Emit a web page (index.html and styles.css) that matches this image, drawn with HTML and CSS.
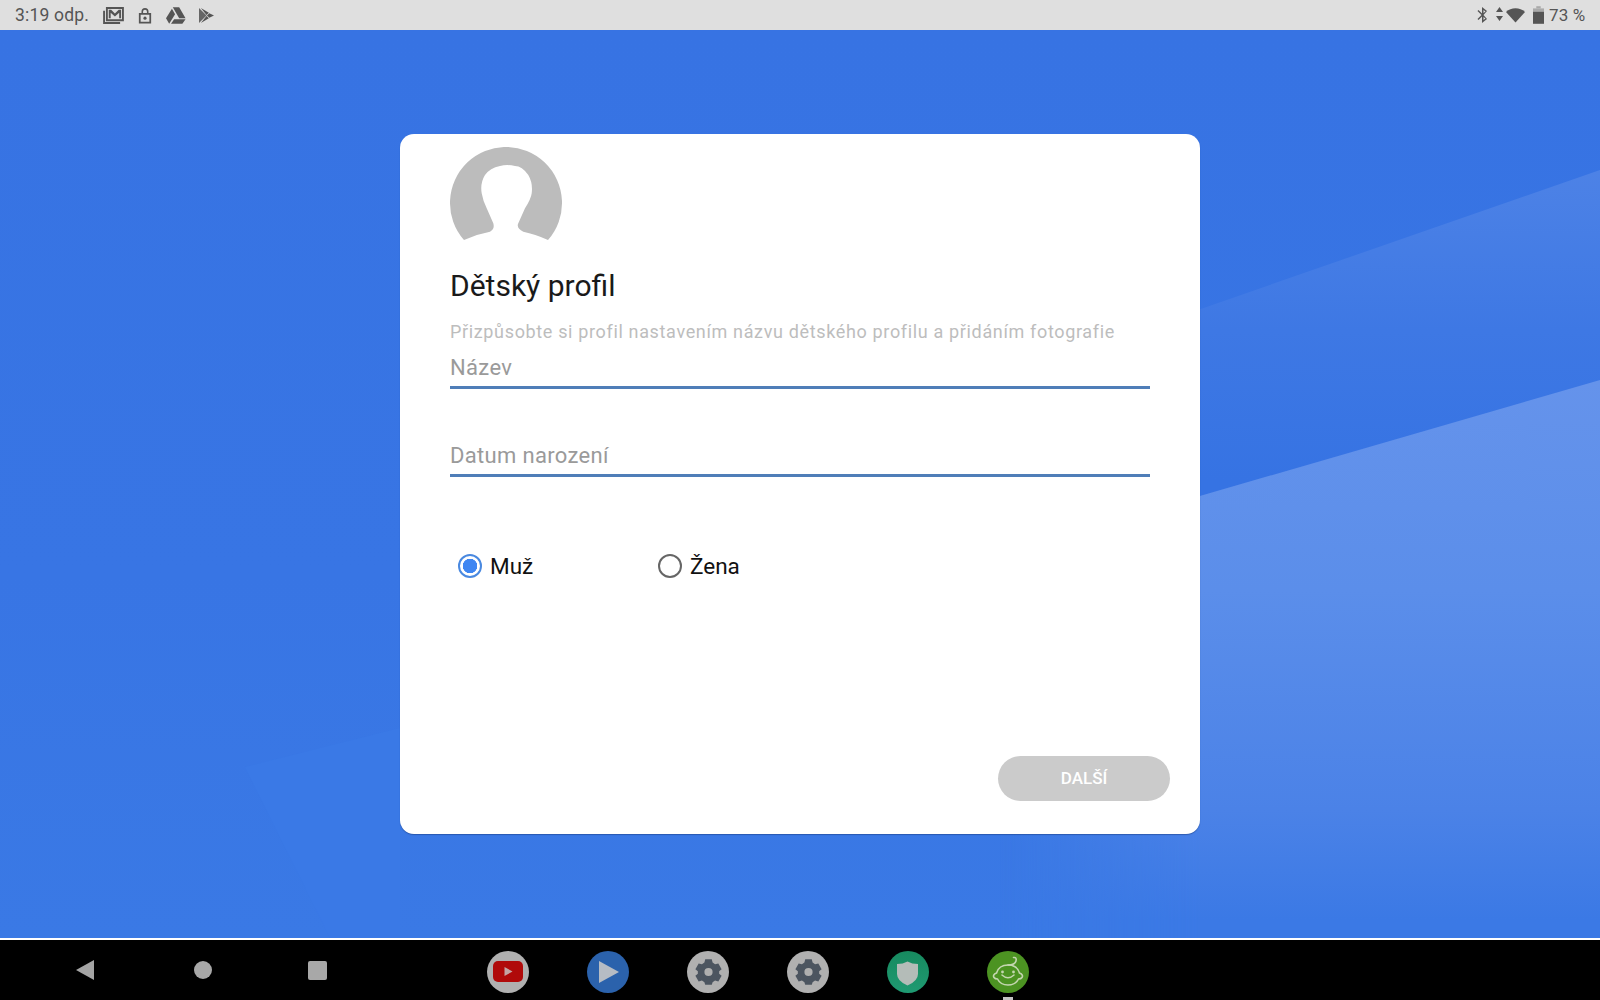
FILE: index.html
```html
<!DOCTYPE html>
<html lang="cs">
<head>
<meta charset="utf-8">
<title>Dětský profil</title>
<link rel="stylesheet" href="styles.css">
</head>
<body>
<header class="status">
  <div class="status-left">
    <span class="clock">3:19 odp.</span>
    <svg class="si si-mail" viewBox="0 0 22 18"><path d="M0 4h2v12h16v2H0z" fill="#555"/><path fill-rule="evenodd" d="M3 0h19v15H3zM5 2v11h15V2zM6 3h2.500l4 4 4-4H19v9h-2V6l-4.500 4L8 6v6H6z" fill="#555"/></svg>
    <svg class="si si-lock" viewBox="0 0 16 18"><path fill-rule="evenodd" d="M1 6h3V4.500a4 4 0 0 1 8 0V6h3v12H1zM3 8v8h10V8zM5.800 6h4.400V4.500a2.200 2.200 0 0 0-4.400 0z" fill="#555"/><circle cx="8" cy="12" r="1.800" fill="#555"/></svg>
    <svg class="si si-drive" viewBox="0 0 22 18"><path d="M7.500 0h7l7 12h-7zM6.500 1.500 10 7.500 3.500 18 0 12zM9 13h12.500L18 18H5.500z" fill="#555"/></svg>
    <svg class="si si-play" viewBox="0 0 16 16"><path d="M0 0l8 8-8 8z" fill="#666"/><path d="M2 0l8.500 5L8 7.500zM8.500 8l2.500-2.500L16 8l-5 2.500zM2 16l6-7.500 2.500 2.500z" fill="#555"/></svg>
  </div>
  <div class="status-right">
    <svg class="si si-bt" viewBox="0 0 11 16"><path d="M5 0l5 4-3.500 4 3.500 4-5 4V9.500L1.500 13 .5 12 4.500 8 .5 4l1-1L5 6.500zM6.500 3v3l2-1.500zM6.500 10v3l2-1.500z" fill="#555"/></svg>
    <svg class="si si-arrows" viewBox="0 0 7 14"><path d="M3.500 0 7 5H0zM0 9h7l-3.500 5z" fill="#555"/></svg>
    <svg class="si si-wifi" viewBox="0 0 19 14"><path d="M0 3.500a14 14 0 0 1 19 0L9.500 14z" fill="#555"/></svg>
    <svg class="si si-batt" viewBox="0 0 10 16"><path d="M3 0h4v2H3z" fill="#aaa"/><path d="M0 2h10v3H0z" fill="#aaa"/><path d="M0 5h10v11H0z" fill="#555"/></svg>
    <span class="batt-text">73 %</span>
  </div>
</header>

<main class="wallpaper">
  <div class="band band-faint"></div>
  <div class="band band-mid"></div>
  <div class="band band-low"></div>
  <section class="card">
    <svg class="avatar" viewBox="0 0 112 96">
      <path d="M14 93A56 56 0 1 1 98 93Q85 87 73.300 84.700Q66 81 68.300 76.300L75 61.300Q81 52 81.700 46.300Q83 36 78.300 28Q72 19 65 19Q57 17 50 19Q40 21 35 28Q30 36 31.700 46.300Q33 54 36.700 61.300L43.300 76.300Q45 82 40 84.700Q27 87 14 93z" fill="#bcbcbc"/>
    </svg>
    <h1 class="title">Dětský profil</h1>
    <p class="hint">Přizpůsobte si profil nastavením názvu dětského profilu a přidáním fotografie</p>
    <div class="field field-name">Název</div>
    <div class="field field-date">Datum narození</div>
    <div class="radios">
      <label class="radio"><span class="dot dot-on"></span>Muž</label>
      <label class="radio"><span class="dot"></span>Žena</label>
    </div>
    <div class="actions"><span class="next">DALŠÍ</span></div>
  </section>
</main>

<footer class="nav">
  <div class="nav-keys">
    <svg class="key" viewBox="0 0 18 20"><path d="M0 10 18 0v20z" fill="#a4a4a4"/></svg>
    <span class="key-home"></span>
    <span class="key-recent"></span>
  </div>
  <div class="apps">
    <span class="app app-grey"><svg viewBox="0 0 42 42"><rect x="6" y="10" width="30" height="21" rx="5" fill="#b00a0a"/><path d="M17.500 16l8 4.500-8 4.500z" fill="#c4a4a4"/></svg></span>
    <span class="app app-blue"><svg viewBox="0 0 42 42"><path d="M12 10l20 11-20 11z" fill="#b6bcc4"/></svg></span>
    <span class="app app-grey"><svg viewBox="0 0 42 42"><path fill-rule="evenodd" d="M17 8h8l1 4 3 2 4-1 4 7-3 2.500v3L37 28l-4 7-4-1-3 2-1 3h-8l-1-3-3-2-4 1-4-7 3-2.500v-3L5 20l4-7 4 1 3-2zM21 18.500a5 5 0 1 0 0 10 5 5 0 0 0 0-10z" transform="translate(21.500 21) scale(.82) translate(-21 -23.500)" fill="#4c5560"/></svg></span>
    <span class="app app-grey"><svg viewBox="0 0 42 42"><path fill-rule="evenodd" d="M17 8h8l1 4 3 2 4-1 4 7-3 2.500v3L37 28l-4 7-4-1-3 2-1 3h-8l-1-3-3-2-4 1-4-7 3-2.500v-3L5 20l4-7 4 1 3-2zM21 18.500a5 5 0 1 0 0 10 5 5 0 0 0 0-10z" transform="translate(21.500 21) scale(.82) translate(-21 -23.500)" fill="#4c5560"/></svg></span>
    <span class="app app-green"><svg viewBox="0 0 42 42"><path d="M10 13q6 0 10.500-2.500Q25 13 31 13v10q0 7-10.500 11.500Q10 30 10 23z" fill="#b4bcb8"/></svg></span>
    <span class="app app-kid"><svg viewBox="0 0 42 42"><g fill="none" stroke="#c4d6b0" stroke-width="1.600" stroke-linecap="round"><path d="M21 14c-6 0-10 3-11.500 8-3 1-3.500 3-2.500 4.500 1 1.500 2.500 1.500 3.500 1.500 2 4 6 6 10.500 6s8.500-2 10.500-6c1 0 2.500 0 3.500-1.500 1-1.500.500-3.500-2.500-4.500-1.500-5-5.500-8-11.500-8z"/><path d="M21 14q7 0 8-4t-2.500-3.500"/><path d="M15 24q6 5.500 12 0"/></g><circle cx="15.500" cy="21" r="1.400" fill="#c4d6b0"/><circle cx="26.500" cy="21" r="1.400" fill="#c4d6b0"/></svg><i class="app-mark"></i></span>
  </div>
</footer>
</body>
</html>
```
FILE: styles.css
```css
* { box-sizing: border-box; }
html, body { margin: 0; height: 100%; }
body {
  display: flex;
  flex-direction: column;
  height: 1000px;
  overflow: hidden;
  font-family: Roboto, "Noto Sans", sans-serif;
  background: #000;
}

.status {
  height: 30px;
  flex: none;
  display: flex;
  justify-content: space-between;
  align-items: center;
  padding: 0 15px;
  background: #dfdfdf;
  color: #555;
  font-size: 17px;
}
.status-left, .status-right { display: flex; align-items: center; }
.clock { width: 88px; font-size: 17.500px; letter-spacing: .2px; }
.si { display: block; flex: none; }
.si-mail { width: 21px; height: 17px; }
.si-lock { width: 14px; height: 17px; margin-left: 14px; }
.si-drive { width: 20px; height: 17px; margin-left: 14px; }
.si-play { width: 15px; height: 15px; margin-left: 13px; }
.si-bt { width: 11px; height: 16px; }
.si-arrows { width: 7px; height: 14px; margin-left: 8px; margin-top: -3px; }
.si-wifi { width: 19px; height: 15px; margin-left: 3px; }
.si-batt { width: 11px; height: 18px; margin-left: 8px; }
.batt-text { margin-left: 5px; width: 36px; font-size: 17px; letter-spacing: .1px; white-space: nowrap; }

.wallpaper {
  position: relative;
  flex: none;
  height: 908px;
  display: flex;
  align-items: center;
  justify-content: center;
  background: linear-gradient(180deg, #3773e3 0%, #3875e4 60%, #3a79e5 100%);
  overflow: hidden;
}
.band { position: absolute; inset: 0; }
.band-faint {
  background: #3a79e6;
  clip-path: polygon(400px 698px, 245px 737px, 330px 908px, 400px 908px);
}
.band-mid {
  background: linear-gradient(180deg, #4d82e6 140px, #3e78e4 300px, #3673e3 450px);
  clip-path: polygon(1100px 314px, 1600px 140px, 1600px 350px, 1100px 495px);
}
.band-low {
  background: linear-gradient(180deg, #6593eb 350px, #5b8eea 560px, #4b82e7 780px, #3b79e5 890px);
  clip-path: polygon(1000px 524px, 1600px 350px, 1600px 908px, 1000px 908px);
  -webkit-mask-image: linear-gradient(90deg, transparent 1000px, #000 1200px);
  mask-image: linear-gradient(90deg, transparent 1000px, #000 1200px);
}

.card {
  position: relative;
  z-index: 1;
  width: 800px;
  height: 700px;
  padding: 13px 50px 0;
  display: flex;
  flex-direction: column;
  background: #fff;
  border-radius: 14px;
  box-shadow: 0 1px 1px rgba(20, 50, 110, .45);
}
.avatar { display: block; width: 112px; height: 96px; flex: none; }
.title {
  margin: 25px 0 0;
  height: 36px;
  font-size: 30px;
  line-height: 36px;
  font-weight: 400;
  color: #1a1a1a;
}
.hint {
  margin: 17px 0 0;
  height: 22px;
  font-size: 18px;
  line-height: 22px;
  letter-spacing: .65px;
  color: #bdbdbd;
  white-space: nowrap;
}
.field {
  height: 36px;
  border-bottom: 3px solid #4f7eb8;
  font-size: 22px;
  color: #9a9a9a;
  letter-spacing: .33px;
}
.field-name { margin-top: 10px; line-height: 29px; }
.field-date { margin-top: 52px; line-height: 30px; }

.radios { display: flex; margin-top: 76px; padding-left: 8px; }
.radio {
  display: flex;
  align-items: center;
  width: 200px;
  height: 26px;
  font-size: 22.500px;
  color: #111;
}
.dot {
  width: 24px;
  height: 24px;
  margin-right: 8px;
  border: 2px solid #666;
  border-radius: 50%;
  background: #fff;
}
.dot-on {
  border-color: #4a89e0;
  background: radial-gradient(circle, #3f86f2 0 7px, #fff 7.500px);
}

.actions {
  margin: auto -20px 33px 0;
  display: flex;
  justify-content: flex-end;
}
.next {
  width: 172px;
  height: 45px;
  border-radius: 23px;
  background: #cbcbcb;
  color: #fff;
  font-size: 17px;
  font-weight: 500;
  line-height: 45px;
  text-align: center;
}

.nav {
  flex: 1;
  display: flex;
  align-items: center;
  border-top: 2px solid #fff;
  background: #000;
  color: #aaa;
}
.nav-keys {
  display: flex;
  align-items: center;
  padding-left: 76px;
  width: 487px;
  flex: none;
}
.key { display: block; width: 18px; height: 20px; }
.key-home {
  width: 18px;
  height: 18px;
  margin-left: 100px;
  border-radius: 50%;
  background: #a8a8a8;
}
.key-recent {
  width: 19px;
  height: 19px;
  margin-left: 96px;
  border-radius: 2px;
  background: #a8a8a8;
}
.apps { display: flex; gap: 58px; margin-top: 3px; }
.app {
  position: relative;
  display: block;
  width: 42px;
  height: 42px;
  border-radius: 50%;
}
.app svg { display: block; width: 42px; height: 42px; }
.app-grey { background: #b0b0b0; }
.app-blue { background: #2b62ac; }
.app-green { background: linear-gradient(180deg, #178a5f, #1f9a72); }
.app-kid { background: #4c9322; }
.app-mark {
  position: absolute;
  left: 16px;
  top: 46px;
  width: 10px;
  height: 4px;
  background: #c4c4c4;
}
```
